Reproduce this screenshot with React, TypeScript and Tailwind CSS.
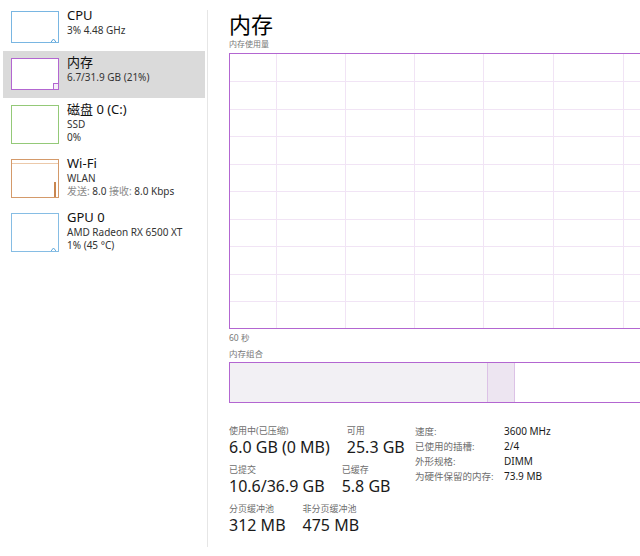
import React from 'react';

const FONT = '"Noto Sans", "Noto Sans CJK SC", sans-serif';

type Item = {
  name: string;
  lines: React.ReactNode[];
  tall?: boolean;
  selected?: boolean;
  kind: 'cpu' | 'mem' | 'disk' | 'wifi' | 'gpu';
};

const Thumb = ({ item }: { item: Item }) => {
  const border =
    item.kind === 'cpu'
      ? 'border-[#79b6e2]'
      : item.kind === 'mem'
      ? 'border-[#b366d1]'
      : item.kind === 'disk'
      ? 'border-[#94c978]'
      : item.kind === 'wifi'
      ? 'border-[#d49a6a]'
      : 'border-[#86bde4]';
  return (
    <div
      className={`relative mt-[4px] w-[48px] shrink-0 border bg-white ${border} ${
        item.tall ? 'h-[39px]' : 'h-[32px]'
      }`}
    >
      {item.kind === 'mem' && (
        <div className="absolute right-0 bottom-0 h-[6px] w-[5px] border-l border-t border-[#b366d1] bg-[#f6eef9]"></div>
      )}
      {(item.kind === 'cpu' || item.kind === 'gpu') && (
        <svg className="absolute right-[2px] bottom-0" width="5" height="4" viewBox="0 0 5 4">
          <polyline points="0,4 2.5,1 5,4" fill="none" stroke={item.kind === 'cpu' ? '#4f9fd8' : '#5aa6dc'} strokeWidth="1" />
        </svg>
      )}
      {item.kind === 'wifi' && (
        <>
          <div className="absolute left-0 right-0 top-[3px] h-px bg-[#ecc9aa]"></div>
          <div className="absolute right-[2px] bottom-0 h-[15px] w-[2px] bg-[#c98650]"></div>
        </>
      )}
    </div>
  );
};

const items: Item[] = [
  { name: 'CPU', lines: ['3%  4.48 GHz'], kind: 'cpu' },
  { name: '内存', lines: ['6.7/31.9 GB (21%)'], kind: 'mem', selected: true },
  { name: '磁盘 0 (C:)', lines: ['SSD', '0%'], kind: 'disk', tall: true },
  {
    name: 'Wi-Fi',
    lines: [
      'WLAN',
      <span key="w">
        <span className="text-[#8a8a8a]">发送: </span>8.0 <span className="text-[#8a8a8a]">接收: </span>8.0 Kbps
      </span>,
    ],
    kind: 'wifi',
    tall: true,
  },
  { name: 'GPU 0', lines: ['AMD Radeon RX 6500 XT', '1% (45 °C)'], kind: 'gpu', tall: true },
];

const vLines = [46, 115, 184, 253, 323, 393];
const hLines = [27, 55, 82, 110, 137, 165, 192, 220, 247];

const Stat = ({ label, value }: { label: string; value: string }) => (
  <div>
    <div className="text-[9px] leading-[12px] text-[#6e6e6e]">{label}</div>
    <div className="whitespace-nowrap text-[16px] leading-[20px]">{value}</div>
  </div>
);

export default function App() {
  return (
    <div className="flex h-[556px] w-[640px] overflow-hidden bg-white text-[#1a1a1a]" style={{ fontFamily: FONT }}>
      {/* Sidebar */}
      <div className="w-[207px] shrink-0 pt-[4px]">
        {items.map((item) => (
          <div
            key={item.name}
            className={`ml-[3px] flex w-[202px] gap-[8px] pl-[8px] pt-[3px] pb-[8px] ${
              item.selected ? 'bg-[#dadada]' : ''
            }`}
          >
            <Thumb item={item} />
            <div className="min-w-0">
              <div className="text-[13px] leading-[17px] text-[#111]">{item.name}</div>
              {item.lines.map((l, i) => (
                <div key={i} className="whitespace-nowrap text-[10px] leading-[13px] text-[#333]">
                  {l}
                </div>
              ))}
            </div>
          </div>
        ))}
      </div>

      {/* Main panel */}
      <div className="mt-[10px] mb-[9px] min-w-0 flex-1 overflow-hidden border-l border-[#e6e6e6] pl-[21px]">
        <div className="-mt-[1px] text-[22px] leading-[30px] text-black">内存</div>
        <div className="-mt-[1px] text-[8px] leading-[12px] text-[#777]">内存使用量</div>

        <div className="relative mt-[3px] h-[276px] w-[470px] border border-[#b366d1]">
          <svg className="absolute inset-0" width="468" height="274">
            {vLines.map((x) => (
              <line key={x} x1={x + 0.5} y1="0" x2={x + 0.5} y2="274" stroke="#f1e4f5" strokeWidth="1" />
            ))}
            {hLines.map((y) => (
              <line key={y} x1="0" y1={y + 0.5} x2="468" y2={y + 0.5} stroke="#f1e4f5" strokeWidth="1" />
            ))}
          </svg>
        </div>

        <div className="mt-[3px] text-[8.5px] leading-[12px] text-[#777]">60 秒</div>
        <div className="mt-[4px] text-[8.5px] leading-[12px] text-[#777]">内存组合</div>
        <div className="mt-[2px] flex h-[41px] w-[470px] border border-[#b366d1]">
          <div className="w-[257px] bg-[#f2f0f4]"></div>
          <div className="w-[28px] border-x border-[#dcc2e6] bg-[#ede5f1]"></div>
          <div className="flex-1 bg-white"></div>
        </div>

        {/* Stats */}
        <div className="mt-[22px] flex items-start">
          <div className="w-[186px] shrink-0">
            <div className="flex gap-[17px]">
              <Stat label="使用中(已压缩)" value="6.0 GB (0 MB)" />
              <Stat label="可用" value="25.3 GB" />
            </div>
            <div className="mt-[7px] flex gap-[17px]">
              <Stat label="已提交" value="10.6/36.9 GB" />
              <Stat label="已缓存" value="5.8 GB" />
            </div>
            <div className="mt-[7px] flex gap-[17px]">
              <Stat label="分页缓冲池" value="312 MB" />
              <Stat label="非分页缓冲池" value="475 MB" />
            </div>
          </div>
          <div className="-mt-[1px] grid grid-cols-[89px_auto] content-start text-[9.5px] leading-[15px]">
            <div className="text-[#6e6e6e]">速度:</div>
            <div className="text-[10px]">3600 MHz</div>
            <div className="text-[#6e6e6e]">已使用的插槽:</div>
            <div className="text-[10px]">2/4</div>
            <div className="text-[#6e6e6e]">外形规格:</div>
            <div className="text-[10px]">DIMM</div>
            <div className="text-[#6e6e6e]">为硬件保留的内存:</div>
            <div className="text-[10px]">73.9 MB</div>
          </div>
        </div>
      </div>
    </div>
  );
}
